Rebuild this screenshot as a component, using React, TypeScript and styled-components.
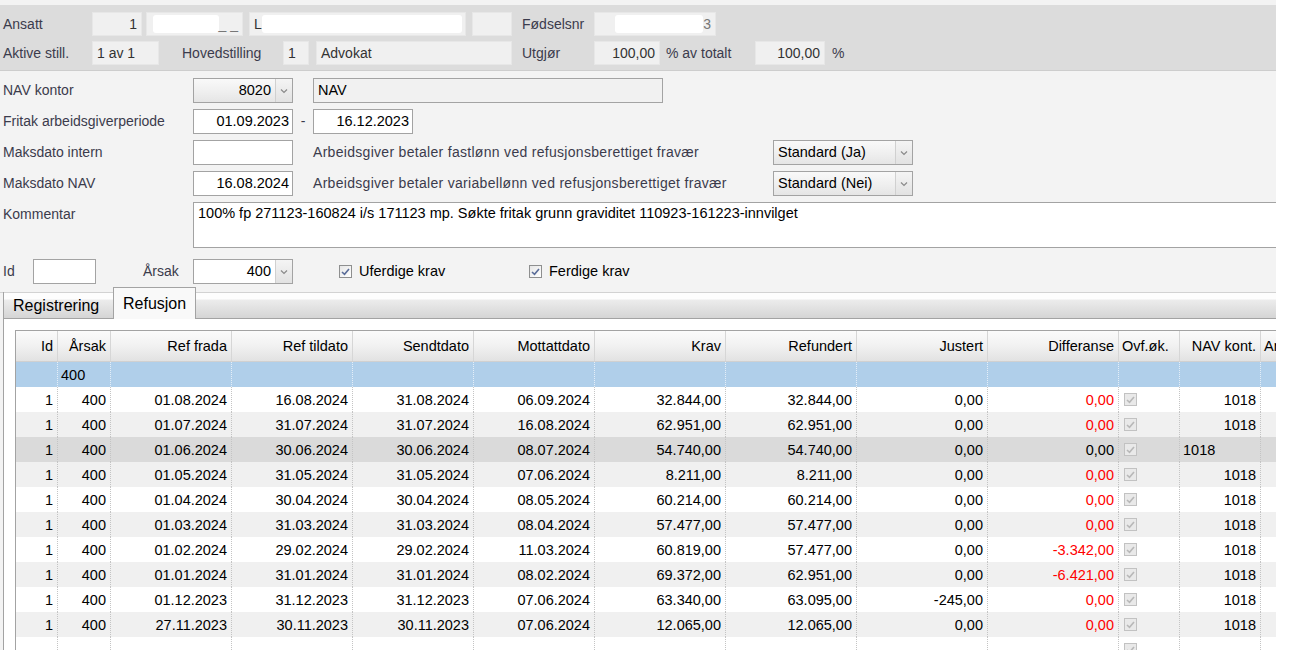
import React from "react";
import styled, { createGlobalStyle, css } from "styled-components";

const GlobalStyle = createGlobalStyle`
  html, body { margin: 0; padding: 0; background: #ffffff; }
  body { font-family: "Liberation Sans", Arial, sans-serif; font-size: 14px; color: #000; }
  * { box-sizing: border-box; }
`;

const Page = styled.div`
  width: 1276px;
  height: 650px;
  overflow: hidden;
  background: #f3f3f3;
  display: flex;
  flex-direction: column;
`;

const TopGap = styled.div`
  height: 5px;
  flex: none;
`;

/* ---------- header ---------- */
const Header = styled.div`
  background: #dcdcdc;
  border-bottom: 1px solid #cdcdcd;
  padding: 7px 0 5px 3px;
  display: flex;
  flex-direction: column;
  gap: 5px;
  flex: none;
`;

const HRow = styled.div`
  display: flex;
  align-items: center;
  height: 24px;
`;

const Label = styled.span<{ $w?: number; $ml?: number; $wide?: boolean }>`
  flex: none;
  width: ${(p) => (p.$w ? `${p.$w}px` : "auto")};
  margin-left: ${(p) => p.$ml ?? 0}px;
  color: #3b3b4c;
  white-space: nowrap;
  letter-spacing: ${(p) => (p.$wide ? "0.3px" : "0")};
`;

const HBox = styled.div<{ $w: number; $ml?: number; $right?: boolean }>`
  flex: none;
  width: ${(p) => p.$w}px;
  margin-left: ${(p) => p.$ml ?? 0}px;
  height: 24px;
  background: #f0f0f0;
  border: 1px solid #e7e7e7;
  padding: 0 4px;
  display: flex;
  align-items: center;
  justify-content: ${(p) => (p.$right ? "flex-end" : "flex-start")};
  color: #333;
  white-space: nowrap;
  overflow: visible;
`;

const Redact = styled.span<{ $w: number }>`
  display: inline-block;
  width: ${(p) => p.$w}px;
  height: 18px;
  background: #ffffff;
  border-radius: 3px;
  flex: none;
`;

const Blur = styled.span`
  color: #777;
`;

/* ---------- form ---------- */
const Form = styled.div`
  padding: 7px 0 0 3px;
  display: flex;
  flex-direction: column;
  gap: 6px;
  flex: none;
`;

const FRow = styled.div<{ $mt?: number; $top?: boolean }>`
  display: flex;
  align-items: ${(p) => (p.$top ? "flex-start" : "center")};
  min-height: 25px;
  margin-top: ${(p) => p.$mt ?? 0}px;
  line-height: 25px;
`;

const Input = styled.div<{ $w: number; $ml?: number; $gray?: boolean; $left?: boolean }>`
  flex: none;
  width: ${(p) => p.$w}px;
  margin-left: ${(p) => p.$ml ?? 0}px;
  height: 25px;
  border: 1px solid #a3a3a3;
  background: ${(p) => (p.$gray ? "#f1f1f1" : "#ffffff")};
  padding: 0 3px 0 4px;
  display: flex;
  align-items: center;
  justify-content: ${(p) => (p.$left ? "flex-start" : "flex-end")};
  font-size: 14.5px;
  color: #000;
`;

const Combo = styled.div<{ $w: number; $ml?: number; $flat?: boolean }>`
  flex: none;
  width: ${(p) => p.$w}px;
  margin-left: ${(p) => p.$ml ?? 0}px;
  height: 25px;
  border: 1px solid #a3a3a3;
  background: ${(p) =>
    p.$flat ? "#ffffff" : "linear-gradient(#f9f9f9 0%, #efefef 55%, #e5e5e5 100%)"};
  display: flex;
  align-items: stretch;
  font-size: 14.5px;
  color: #000;
`;

const ComboText = styled.span<{ $left?: boolean }>`
  flex: 1;
  display: flex;
  align-items: center;
  justify-content: ${(p) => (p.$left ? "flex-start" : "flex-end")};
  padding: 0 4px;
  white-space: nowrap;
`;

const ComboArrow = styled.span`
  flex: none;
  width: 17px;
  border-left: 1px solid #d0d0d0;
  background: linear-gradient(#f4f4f4, #e2e2e2);
  display: flex;
  align-items: center;
  justify-content: center;
`;

const Dash = styled.span`
  flex: none;
  width: 20px;
  text-align: center;
  color: #3b3b4c;
`;

const TextArea = styled.div`
  flex: none;
  width: 1100px;
  height: 46px;
  background: #fff;
  border: 1px solid #a3a3a3;
  padding: 0 4px;
  line-height: 20px;
  font-size: 14.5px;
  color: #000;
  white-space: nowrap;
`;

const CheckLabel = styled.label<{ $w: number }>`
  flex: none;
  width: ${(p) => p.$w}px;
  display: flex;
  align-items: center;
  gap: 7px;
  color: #000;
  font-size: 14.5px;
`;

const Box = styled.span<{ $disabled?: boolean }>`
  flex: none;
  width: 13px;
  height: 13px;
  border: 1px solid ${(p) => (p.$disabled ? "#c2c2c2" : "#8e8f8f")};
  background: ${(p) =>
    p.$disabled ? "#e9e9e9" : "linear-gradient(135deg, #e6e6e6, #ffffff)"};
  display: inline-flex;
  align-items: center;
  justify-content: center;
`;

const Separator = styled.div`
  margin-top: 8px;
  border-top: 1px solid #d2d2d2;
  flex: none;
`;

/* ---------- tabs ---------- */
const TabArea = styled.div`
  padding-left: 3px;
  display: flex;
  flex-direction: column;
  flex: 1;
  min-height: 0;
`;

const TabStrip = styled.div`
  height: 26px;
  flex: none;
  display: flex;
  align-items: flex-end;
  background: linear-gradient(#fdfdfd 0px, #fdfdfd 6px, #ececec 7px, #d5d5d5 100%);
  border-bottom: 1px solid #a3a3a3;
`;

const Tab = styled.div<{ $active?: boolean }>`
  flex: none;
  display: flex;
  align-items: center;
  padding: 0 9px;
  font-size: 16px;
  color: #000;
  ${(p) =>
    p.$active
      ? css`
          height: 32px;
          margin-bottom: -1px;
          background: #f9f9f9;
          border: 1px solid #a3a3a3;
          border-bottom: none;
          padding-top: 1px;
        `
      : css`
          height: 26px;
          border-left: 1px solid #a3a3a3;
          padding-top: 2px;
          width: 110px;
        `}
`;

const Panel = styled.div`
  flex: 1;
  background: #ffffff;
  border-left: 1px solid #a3a3a3;
  padding: 11px 0 0 11px;
  min-height: 0;
`;

/* ---------- grid ---------- */
const COLS = "42px 53px 121px 121px 121px 121px 131px 131px 131px 131px 61px 81px 90px";

const Table = styled.div`
  border-top: 1px solid #a3a3a3;
  border-left: 1px solid #a3a3a3;
  font-size: 14.5px;
`;

const HeadRow = styled.div`
  display: grid;
  grid-template-columns: ${COLS};
  height: 31px;
  background: linear-gradient(#fbfbfb 0%, #f1f1f1 50%, #e2e2e2 100%);
  border-bottom: 1px solid #d0d0d0;
`;

const HeadCell = styled.div<{ $left?: boolean }>`
  border-right: 1px solid #d6d6d6;
  display: flex;
  align-items: center;
  justify-content: ${(p) => (p.$left ? "flex-start" : "flex-end")};
  padding: 0 4px 0 3px;
  white-space: nowrap;
  overflow: hidden;
`;

const DataRow = styled.div<{ $bg: string }>`
  display: grid;
  grid-template-columns: ${COLS};
  height: 25px;
  background: ${(p) => p.$bg};
`;

const Cell = styled.div<{ $left?: boolean; $red?: boolean; $light?: boolean }>`
  border-right: 1px dotted ${(p) => (p.$light ? "#e4eef8" : "#c4c4c4")};
  display: flex;
  align-items: center;
  justify-content: ${(p) => (p.$left ? "flex-start" : "flex-end")};
  padding: 0 4px 0 3px;
  white-space: nowrap;
  overflow: hidden;
  color: ${(p) => (p.$red ? "#ff0000" : "#000")};
`;

const CheckCell = styled(Cell)`
  padding-left: 5px;
`;

const Chevron = () => (
  <svg width="8" height="6" viewBox="0 0 8 6">
    <path d="M1 1.5 L4 4.5 L7 1.5" fill="none" stroke="#8a8a8a" strokeWidth="1.2" />
  </svg>
);

const Check = ({ disabled }: { disabled?: boolean }) => (
  <Box $disabled={disabled}>
    <svg width="9" height="8" viewBox="0 0 9 8">
      <path
        d="M1 4 L3.5 6.3 L8 1"
        fill="none"
        stroke={disabled ? "#b8b8b8" : "#5a6d99"}
        strokeWidth="1.6"
      />
    </svg>
  </Box>
);

type R = string[];
const rows: R[] = [
  ["1", "400", "01.08.2024", "16.08.2024", "31.08.2024", "06.09.2024", "32.844,00", "32.844,00", "0,00", "0,00", "1018"],
  ["1", "400", "01.07.2024", "31.07.2024", "31.07.2024", "16.08.2024", "62.951,00", "62.951,00", "0,00", "0,00", "1018"],
  ["1", "400", "01.06.2024", "30.06.2024", "30.06.2024", "08.07.2024", "54.740,00", "54.740,00", "0,00", "0,00", "1018"],
  ["1", "400", "01.05.2024", "31.05.2024", "31.05.2024", "07.06.2024", "8.211,00", "8.211,00", "0,00", "0,00", "1018"],
  ["1", "400", "01.04.2024", "30.04.2024", "30.04.2024", "08.05.2024", "60.214,00", "60.214,00", "0,00", "0,00", "1018"],
  ["1", "400", "01.03.2024", "31.03.2024", "31.03.2024", "08.04.2024", "57.477,00", "57.477,00", "0,00", "0,00", "1018"],
  ["1", "400", "01.02.2024", "29.02.2024", "29.02.2024", "11.03.2024", "60.819,00", "57.477,00", "0,00", "-3.342,00", "1018"],
  ["1", "400", "01.01.2024", "31.01.2024", "31.01.2024", "08.02.2024", "69.372,00", "62.951,00", "0,00", "-6.421,00", "1018"],
  ["1", "400", "01.12.2023", "31.12.2023", "31.12.2023", "07.06.2024", "63.340,00", "63.095,00", "-245,00", "0,00", "1018"],
  ["1", "400", "27.11.2023", "30.11.2023", "30.11.2023", "07.06.2024", "12.065,00", "12.065,00", "0,00", "0,00", "1018"],
];

const headers = ["Id", "Årsak", "Ref frada", "Ref tildato", "Sendtdato", "Mottattdato", "Krav", "Refundert", "Justert", "Differanse"];

export default function App() {
  const SELECTED = 2;
  return (
    <>
      <GlobalStyle />
      <Page>
        <TopGap />
        <Header>
          <HRow>
            <Label $w={89}>Ansatt</Label>
            <HBox $w={50} $right>1</HBox>
            <HBox $w={97} $ml={4} $right>
              <Redact $w={66} />
              <Blur>_ _</Blur>
            </HBox>
            <HBox $w={217} $ml={6}>
              L<Redact $w={200} />
            </HBox>
            <HBox $w={40} $ml={6} />
            <Label $w={72} $ml={10}>Fødselsnr</Label>
            <HBox $w={122} $right>
              <Redact $w={88} />
              <Blur>3</Blur>
            </HBox>
          </HRow>
          <HRow>
            <Label $w={89}>Aktive still.</Label>
            <HBox $w={67}>1 av 1</HBox>
            <Label $w={101} $ml={23}>Hovedstilling</Label>
            <HBox $w={26}>1</HBox>
            <HBox $w={196} $ml={7}>Advokat</HBox>
            <Label $w={72} $ml={10}>Utgjør</Label>
            <HBox $w={66} $right>100,00</HBox>
            <Label $w={89} $ml={6}>% av totalt</Label>
            <HBox $w={70} $right>100,00</HBox>
            <Label $ml={7}>%</Label>
          </HRow>
        </Header>

        <Form>
          <FRow>
            <Label $w={190}>NAV kontor</Label>
            <Combo $w={100}>
              <ComboText>8020</ComboText>
              <ComboArrow>
                <Chevron />
              </ComboArrow>
            </Combo>
            <Input $w={350} $ml={20} $gray $left>NAV</Input>
          </FRow>
          <FRow>
            <Label $w={190}>Fritak arbeidsgiverperiode</Label>
            <Input $w={100}>01.09.2023</Input>
            <Dash>-</Dash>
            <Input $w={100}>16.12.2023</Input>
          </FRow>
          <FRow>
            <Label $w={190}>Maksdato intern</Label>
            <Input $w={100} />
            <Label $w={460} $ml={20} $wide>Arbeidsgiver betaler fastlønn ved refusjonsberettiget fravær</Label>
            <Combo $w={140}>
              <ComboText $left>Standard (Ja)</ComboText>
              <ComboArrow>
                <Chevron />
              </ComboArrow>
            </Combo>
          </FRow>
          <FRow>
            <Label $w={190}>Maksdato NAV</Label>
            <Input $w={100}>16.08.2024</Input>
            <Label $w={460} $ml={20} $wide>Arbeidsgiver betaler variabellønn ved refusjonsberettiget fravær</Label>
            <Combo $w={140}>
              <ComboText $left>Standard (Nei)</ComboText>
              <ComboArrow>
                <Chevron />
              </ComboArrow>
            </Combo>
          </FRow>
          <FRow $top>
            <Label $w={190}>Kommentar</Label>
            <TextArea>
              100% fp 271123-160824 i/s 171123 mp. Søkte fritak grunn graviditet 110923-161223-innvilget
            </TextArea>
          </FRow>
          <FRow $mt={5}>
            <Label $w={30}>Id</Label>
            <Input $w={63} />
            <Label $w={50} $ml={47}>Årsak</Label>
            <Combo $w={100} $flat>
              <ComboText>400</ComboText>
              <ComboArrow>
                <Chevron />
              </ComboArrow>
            </Combo>
            <Label $w={46} />
            <CheckLabel $w={190}>
              <Check />
              Uferdige krav
            </CheckLabel>
            <CheckLabel $w={150}>
              <Check />
              Ferdige krav
            </CheckLabel>
          </FRow>
        </Form>

        <Separator />

        <TabArea>
          <TabStrip>
            <Tab>Registrering</Tab>
            <Tab $active>Refusjon</Tab>
          </TabStrip>
          <Panel>
            <Table>
              <HeadRow>
                {headers.map((h) => (
                  <HeadCell key={h}>{h}</HeadCell>
                ))}
                <HeadCell $left>Ovf.øk.</HeadCell>
                <HeadCell>NAV kont.</HeadCell>
                <HeadCell $left>Arbeidsgiver</HeadCell>
              </HeadRow>
              <DataRow $bg="#b0cfea">
                <Cell $light />
                <Cell $light $left>400</Cell>
                {Array.from({ length: 11 }).map((_, i) => (
                  <Cell $light key={i} />
                ))}
              </DataRow>
              {rows.map((r, i) => {
                const sel = i === SELECTED;
                const bg = sel ? "#dadada" : i % 2 === 1 ? "#f0f0f0" : "#ffffff";
                return (
                  <DataRow $bg={bg} key={i}>
                    {r.slice(0, 9).map((v, j) => (
                      <Cell key={j}>{v}</Cell>
                    ))}
                    <Cell $red={!sel}>{r[9]}</Cell>
                    <CheckCell $left>
                      <Check disabled />
                    </CheckCell>
                    <Cell $left={sel}>{r[10]}</Cell>
                    <Cell />
                  </DataRow>
                );
              })}
              <DataRow $bg="#ffffff">
                {Array.from({ length: 10 }).map((_, i) => (
                  <Cell key={i} />
                ))}
                <CheckCell $left>
                  <Check disabled />
                </CheckCell>
                <Cell />
                <Cell />
              </DataRow>
            </Table>
          </Panel>
        </TabArea>
      </Page>
    </>
  );
}
